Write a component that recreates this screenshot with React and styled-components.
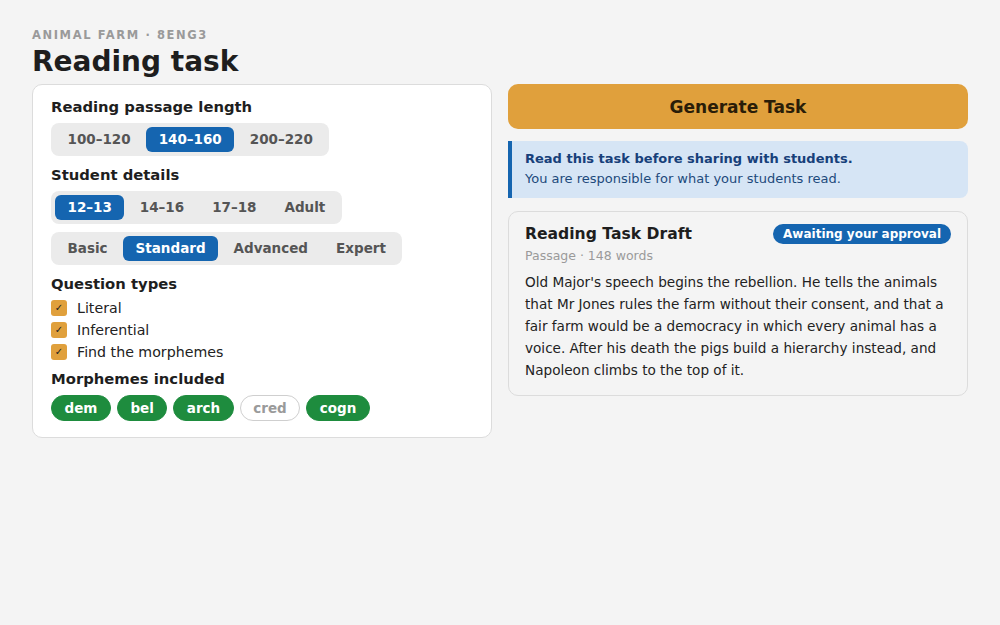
import React from "react";
import styled, { createGlobalStyle } from "styled-components";

const GlobalStyle = createGlobalStyle`
  * { box-sizing: border-box; }
  body {
    margin: 0;
    background: #f4f4f4;
    font-family: "DejaVu Sans", Verdana, sans-serif;
    color: #1e1e1e;
  }
`;

const Page = styled.div`
  padding: 28px 32px;
`;

const Eyebrow = styled.div`
  font-size: 11.5px;
  font-weight: bold;
  letter-spacing: 1.6px;
  color: #9a9a9a;
  text-transform: uppercase;
  line-height: 14px;
`;

const Title = styled.h1`
  margin: 3px 0 5px;
  font-size: 28px;
  line-height: 34px;
  font-weight: bold;
  color: #1e1e1e;
`;

const Columns = styled.div`
  display: grid;
  grid-template-columns: 1fr 1fr;
  gap: 16px;
  align-items: start;
`;

const Card = styled.div`
  background: #fff;
  border: 1px solid #dcdcdc;
  border-radius: 10px;
  padding: 11px 18px 16px;
  display: flex;
  flex-direction: column;
  align-items: flex-start;
`;

const Heading = styled.div`
  font-size: 14.8px;
  font-weight: bold;
  line-height: 22px;
  margin: ${({ $top }) => $top || 0}px 0 ${({ $bottom }) => ($bottom ?? 5)}px;
`;

const Segmented = styled.div`
  display: inline-flex;
  background: #ebebeb;
  border-radius: 8px;
  padding: 4px;
  gap: 3px;
  margin-bottom: ${({ $mb }) => $mb || 0}px;
`;

const Segment = styled.div`
  font-size: 13.5px;
  font-weight: bold;
  line-height: 25px;
  padding: 0 12.5px;
  border-radius: 6px;
  color: ${({ $active }) => ($active ? "#fff" : "#555")};
  background: ${({ $active }) => ($active ? "#1565b0" : "transparent")};
`;

const CheckRow = styled.label`
  display: flex;
  align-items: center;
  gap: 10px;
  font-size: 14.2px;
  line-height: 22px;
  color: #222;
`;

const Box = styled.span`
  width: 16px;
  height: 16px;
  border-radius: 3px;
  background: #e0a03c;
  color: #222;
  font-size: 10px;
  display: flex;
  align-items: center;
  justify-content: center;
`;

const Pills = styled.div`
  display: flex;
  gap: 6px;
`;

const Pill = styled.span`
  font-size: 13.5px;
  font-weight: bold;
  line-height: 24px;
  padding: 0 12.5px;
  border-radius: 13px;
  border: 1px solid ${({ $off }) => ($off ? "#cfcfcf" : "#1e8c3e")};
  background: ${({ $off }) => ($off ? "#fff" : "#1e8c3e")};
  color: ${({ $off }) => ($off ? "#9a9a9a" : "#fff")};
`;

const Side = styled.div`
  display: flex;
  flex-direction: column;
`;

const GenerateButton = styled.button`
  height: 45px;
  border: none;
  border-radius: 10px;
  background: #e0a03c;
  color: #2a1d08;
  font-family: inherit;
  font-size: 17px;
  font-weight: bold;
  margin-bottom: 12px;
`;

const Notice = styled.div`
  background: #d6e5f5;
  border-left: 4px solid #1565b0;
  border-radius: 0 8px 8px 0;
  padding: 8px 13px 9px;
  color: #1d4a7c;
  font-size: 13px;
  line-height: 20px;
  margin-bottom: 13px;

  strong {
    display: block;
    color: #17407a;
  }
`;

const Draft = styled.div`
  border: 1px solid #dcdcdc;
  border-radius: 10px;
  padding: 11px 16px 14px;
`;

const DraftHead = styled.div`
  display: flex;
  justify-content: space-between;
  align-items: center;
`;

const DraftTitle = styled.div`
  font-size: 15.6px;
  font-weight: bold;
  line-height: 22px;
`;

const Badge = styled.span`
  background: #1565b0;
  color: #fff;
  font-size: 12px;
  font-weight: bold;
  line-height: 20px;
  padding: 0 10px;
  border-radius: 10px;
`;

const Meta = styled.div`
  font-size: 12.5px;
  color: #9a9a9a;
  line-height: 22px;
  margin-bottom: 4px;
`;

const Body = styled.p`
  margin: 0;
  font-size: 13.6px;
  line-height: 22px;
  color: #222;
`;

const lengths = ["100–120", "140–160", "200–220"];
const ages = ["12–13", "14–16", "17–18", "Adult"];
const levels = ["Basic", "Standard", "Advanced", "Expert"];
const questions = ["Literal", "Inferential", "Find the morphemes"];
const morphemes = [
  { text: "dem" },
  { text: "bel" },
  { text: "arch" },
  { text: "cred", off: true },
  { text: "cogn" },
];

export default function App() {
  return (
    <Page>
      <GlobalStyle />
      <Eyebrow>Animal Farm · 8ENG3</Eyebrow>
      <Title>Reading task</Title>
      <Columns>
        <Card>
          <Heading>Reading passage length</Heading>
          <Segmented>
            {lengths.map((l) => (
              <Segment key={l} $active={l === "140–160"}>{l}</Segment>
            ))}
          </Segmented>
          <Heading $top={8}>Student details</Heading>
          <Segmented $mb={8}>
            {ages.map((a) => (
              <Segment key={a} $active={a === "12–13"}>{a}</Segment>
            ))}
          </Segmented>
          <Segmented>
            {levels.map((l) => (
              <Segment key={l} $active={l === "Standard"}>{l}</Segment>
            ))}
          </Segmented>
          <Heading $top={8} $bottom={2}>Question types</Heading>
          {questions.map((q) => (
            <CheckRow key={q}>
              <Box>✓</Box>
              {q}
            </CheckRow>
          ))}
          <Heading $top={5} $bottom={5}>Morphemes included</Heading>
          <Pills>
            {morphemes.map((m) => (
              <Pill key={m.text} $off={m.off}>{m.text}</Pill>
            ))}
          </Pills>
        </Card>
        <Side>
          <GenerateButton>Generate Task</GenerateButton>
          <Notice>
            <strong>Read this task before sharing with students.</strong>
            You are responsible for what your students read.
          </Notice>
          <Draft>
            <DraftHead>
              <DraftTitle>Reading Task Draft</DraftTitle>
              <Badge>Awaiting your approval</Badge>
            </DraftHead>
            <Meta>Passage · 148 words</Meta>
            <Body>
              Old Major's speech begins the rebellion. He tells the animals
              that Mr Jones rules the farm without their consent, and that a
              fair farm would be a democracy in which every animal has a
              voice. After his death the pigs build a hierarchy instead, and
              Napoleon climbs to the top of it.
            </Body>
          </Draft>
        </Side>
      </Columns>
    </Page>
  );
}
